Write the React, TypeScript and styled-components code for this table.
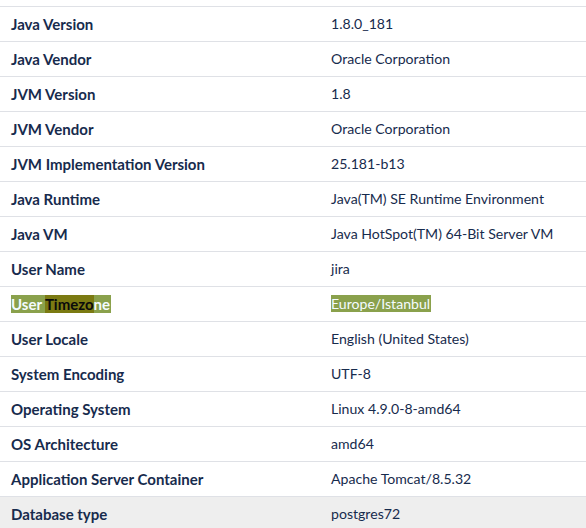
import React from "react";
import styled, { createGlobalStyle } from "styled-components";

const Global = createGlobalStyle`
  html, body { margin: 0; padding: 0; background: #fff; }
  body { font-family: "Lato", "Open Sans", sans-serif; color: #172b4d; }
`;

const Table = styled.div`
  width: 586px;
  padding-top: 6px;
  box-sizing: border-box;
`;

const Row = styled.div<{ $shaded?: boolean }>`
  display: grid;
  grid-template-columns: 320px 1fr;
  height: 35px;
  box-sizing: border-box;
  border-top: 1px solid #dfe1e6;
  align-items: center;
  background: ${(p) => (p.$shaded ? "#eeeeee" : "#fff")};
  line-height: 20px;
`;

const Label = styled.div`
  padding-left: 11px;
  font-weight: 700;
  font-size: 15px;
`;

const Value = styled.div`
  padding-left: 11px;
  font-size: 14.1px;
`;

const Hit = styled.span`
  background: #8aa14c;
  color: #f4fbff;
  padding: 0 1px 0 0;
`;

const HitStrong = styled.span`
  background: #7b7a12;
  color: #0a0a0a;
`;

const rows: [React.ReactNode, React.ReactNode][] = [
  ["Java Version", "1.8.0_181"],
  ["Java Vendor", "Oracle Corporation"],
  ["JVM Version", "1.8"],
  ["JVM Vendor", "Oracle Corporation"],
  ["JVM Implementation Version", "25.181-b13"],
  ["Java Runtime", "Java(TM) SE Runtime Environment"],
  ["Java VM", "Java HotSpot(TM) 64-Bit Server VM"],
  ["User Name", "jira"],
  [
    <Hit>
      User <HitStrong>Timezo</HitStrong>ne
    </Hit>,
    <Hit>Europe/Istanbul</Hit>,
  ],
  ["User Locale", "English (United States)"],
  ["System Encoding", "UTF-8"],
  ["Operating System", "Linux 4.9.0-8-amd64"],
  ["OS Architecture", "amd64"],
  ["Application Server Container", "Apache Tomcat/8.5.32"],
  ["Database type", "postgres72"],
];

export default function App() {
  return (
    <>
      <Global />
      <Table>
        {rows.map(([k, v], i) => (
          <Row key={i} $shaded={i === rows.length - 1}>
            <Label>{k}</Label>
            <Value>{v}</Value>
          </Row>
        ))}
      </Table>
    </>
  );
}
